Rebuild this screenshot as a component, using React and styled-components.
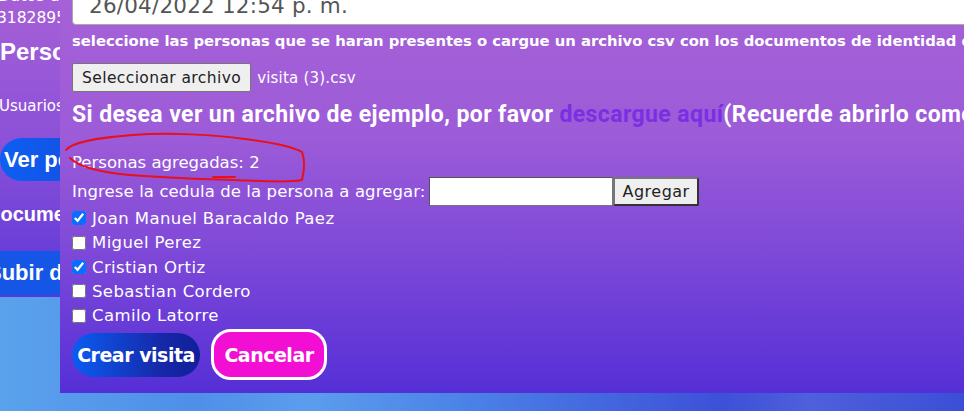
import styled, { createGlobalStyle } from "styled-components";

const GlobalStyle = createGlobalStyle`
  html, body {
    margin: 0;
    padding: 0;
    overflow: hidden;
  }
  body {
    font-family: "DejaVu Sans", "Liberation Sans", sans-serif;
  }
  * {
    box-sizing: border-box;
  }
`;

const gothic = `"DejaVu Sans", "Liberation Sans", sans-serif`;

const Page = styled.div`
  position: relative;
  width: 964px;
  height: 411px;
  overflow: hidden;
  background: linear-gradient(
    90deg,
    #5aa2ec 0%,
    #4f8fe9 20%,
    #5b9ded 32%,
    #4a7fe6 50%,
    #4468df 62%,
    #3d50d8 75%,
    #4e60dc 84%,
    #3c4ed6 100%
  );
`;

const BehindCard = styled.div`
  width: 420px;
  height: 297px;
  background: linear-gradient(180deg, #a660d6 0%, #8a50d8 50%, #5a36d8 100%);
  display: flex;
  flex-direction: column;
  color: #fff;
  overflow: hidden;
`;

const BehindText = styled.div`
  margin-left: ${(p) => p.$offset || 0}px;
  margin-top: ${(p) => p.$top || 0}px;
  font-family: ${(p) => (p.$bold ? `"Liberation Sans", sans-serif` : gothic)};
  font-size: ${(p) => p.$size || 15}px;
  font-weight: ${(p) => (p.$bold ? 700 : 400)};
  line-height: ${(p) => p.$lh || 20}px;
  white-space: nowrap;
`;

const BehindPill = styled.div`
  margin-top: ${(p) => p.$top}px;
  margin-left: ${(p) => p.$offset || 0}px;
  width: ${(p) => p.$width}px;
  height: ${(p) => p.$height}px;
  border-radius: ${(p) => p.$radius}px;
  background: ${(p) =>
    p.$flat ? "#1656e6" : "linear-gradient(90deg, #0d5ff2 0%, #1e3ccc 100%)"};
  padding-left: ${(p) => p.$pad}px;
  display: flex;
  align-items: center;
  font-family: "Liberation Sans", sans-serif;
  font-weight: 700;
  font-size: 22px;
  color: #fff;
  white-space: nowrap;
`;

const Modal = styled.div`
  position: absolute;
  left: 60px;
  top: -30px;
  right: -300px;
  bottom: 18px;
  padding: 0 12px 13px;
  background: linear-gradient(180deg, #a862d7 0%, #9c5bd8 40%, #7a46d8 70%, #552fd6 100%);
  display: flex;
  flex-direction: column;
  color: #fff;
  font-family: ${gothic};
`;

const DateField = styled.div`
  height: 56px;
  background: #fff;
  border: 1px solid #a9a9a9;
  border-radius: 4px;
  padding: 23px 0 0 16px;
  font-family: ${gothic};
  font-size: 21.5px;
  line-height: 24px;
  color: #555;
  letter-spacing: 0.2px;
`;

const Hint = styled.p`
  margin: 7px 0 0;
  font-size: 14.8px;
  line-height: 18px;
  font-weight: 700;
  white-space: nowrap;
`;

const FileRow = styled.div`
  margin-top: 13px;
  display: flex;
  align-items: center;
  gap: 6px;
`;

const NativeButton = styled.button`
  height: 29px;
  padding: 0 ${(p) => (p.$raised ? 7 : 9)}px;
  background: #efefef;
  border-style: solid;
  border-color: #767676;
  border-right-color: ${(p) => (p.$raised ? "#333" : "#767676")};
  border-bottom-color: ${(p) => (p.$raised ? "#333" : "#767676")};
  border-width: ${(p) => (p.$raised ? "2px" : "1px")};
  border-radius: 2px;
  font-family: ${gothic};
  font-size: ${(p) => (p.$raised ? 16 : 15.5)}px;
  letter-spacing: ${(p) => (p.$raised ? 0.5 : 0.4)}px;
  color: #222;
  cursor: pointer;
`;

const FileName = styled.span`
  font-size: 15px;
  letter-spacing: 0.2px;
  color: #fff;
`;

const ExampleNote = styled.p`
  margin: 10px 0 0;
  font-family: Roboto, "Liberation Sans", sans-serif;
  font-size: 23px;
  font-weight: 700;
  line-height: 26px;
  letter-spacing: 0.4px;
  white-space: nowrap;
`;

const ExampleLink = styled.a`
  color: #7a2fe3;
  text-decoration: none;
  cursor: pointer;
`;

const Count = styled.p`
  margin: 25px 0 0;
  font-size: 16.5px;
  line-height: 20px;
`;

const AddRow = styled.div`
  margin-top: 4px;
  display: flex;
  align-items: center;
  font-size: 16.5px;
  letter-spacing: 0.1px;
`;

const CedulaInput = styled.input`
  margin-left: 4px;
  width: 184px;
  height: 29px;
  border: 1px solid #767676;
  border-top-color: #555;
  border-left-color: #555;
  background: #fff;
  padding: 0 4px;
  font-family: ${gothic};
  font-size: 15px;
  outline: none;
`;

const PeopleList = styled.ul`
  margin: 0;
  padding: 0;
  list-style: none;
`;

const Person = styled.li`
  height: 24.4px;
  display: flex;
  align-items: center;
  font-size: 16.5px;
  letter-spacing: 0.4px;
`;

const Check = styled.input`
  margin: 0 6px 0 0;
  width: 14px;
  height: 14px;
  accent-color: #0b6cff;
`;

const Actions = styled.div`
  margin-top: 1px;
  display: flex;
  align-items: center;
  gap: 11px;
`;

const ActionButton = styled.button`
  height: ${(p) => (p.$danger ? 51 : 44)}px;
  width: ${(p) => (p.$danger ? 116 : 128)}px;
  padding: 0;
  border-radius: ${(p) => (p.$danger ? 20 : 22)}px;
  border: ${(p) => (p.$danger ? "3px solid #fff" : "none")};
  background: ${(p) =>
    p.$danger ? "#f20fd3" : "linear-gradient(90deg, #0b5cf2 0%, #1628a8 70%, #10209a 100%)"};
  color: #fff;
  font-family: ${gothic};
  font-weight: 700;
  font-size: 19px;
  letter-spacing: -0.5px;
  cursor: pointer;
  white-space: nowrap;
`;

const Annotation = styled.svg`
  position: absolute;
  left: 0;
  top: 0;
  pointer-events: none;
`;

const people = [
  { name: "Joan Manuel Baracaldo Paez", checked: true },
  { name: "Miguel Perez", checked: false },
  { name: "Cristian Ortiz", checked: true },
  { name: "Sebastian Cordero", checked: false },
  { name: "Camilo Latorre", checked: false },
];

export default function App() {
  return (
    <>
      <GlobalStyle />
      <Page>
        <BehindCard>
          <BehindText $top={-14} $offset={-2} $size={16}>
            Datos del visitante
          </BehindText>
          <BehindText $top={2} $offset={-3} $size={15.5}>
            3182895
          </BehindText>
          <BehindText $top={10} $offset={0} $size={24} $bold $lh={28}>
            Personas
          </BehindText>
          <BehindText $top={30} $offset={-1} $size={15}>
            Usuarios
          </BehindText>
          <BehindPill $top={22} $width={200} $height={43} $radius={22} $pad={4}>
            Ver personas
          </BehindPill>
          <BehindText $top={21} $offset={-14} $size={20} $bold $lh={24}>
            Documentos
          </BehindText>
          <BehindPill $top={25} $width={240} $height={44} $radius={0} $pad={0} $offset={-13} $flat>
            Subir documentos
          </BehindPill>
        </BehindCard>

        <Modal>
          <DateField>26/04/2022 12:54 p. m.</DateField>
          <Hint>
            seleccione las personas que se haran presentes o cargue un archivo csv con los
            documentos de identidad de los visitantes
          </Hint>
          <FileRow>
            <NativeButton>Seleccionar archivo</NativeButton>
            <FileName>visita (3).csv</FileName>
          </FileRow>
          <ExampleNote>
            Si desea ver un archivo de ejemplo, por favor{" "}
            <ExampleLink>descargue aquí</ExampleLink>(Recuerde abrirlo como texto)
          </ExampleNote>
          <Count>Personas agregadas: 2</Count>
          <AddRow>
            Ingrese la cedula de la persona a agregar:
            <CedulaInput type="text" />
            <NativeButton $raised>Agregar</NativeButton>
          </AddRow>
          <PeopleList>
            {people.map((p) => (
              <Person key={p.name}>
                <Check type="checkbox" defaultChecked={p.checked} />
                {p.name}
              </Person>
            ))}
          </PeopleList>
          <Actions>
            <ActionButton>Crear visita</ActionButton>
            <ActionButton $danger>Cancelar</ActionButton>
          </Actions>
        </Modal>

        <Annotation width="964" height="411" viewBox="0 0 964 411">
          <path
            d="M66 150 C 72 142, 95 138, 133 135 C 170 132, 215 135, 245 139 C 270 142, 292 146, 302 152 C 305 160, 304 172, 302 180 C 290 183, 260 181, 233 180 C 200 179, 160 178, 120 174 C 95 171, 78 166, 70 158"
            fill="none"
            stroke="#e8101a"
            strokeWidth="2"
            strokeLinecap="round"
          />
          <path d="M213 177 L 235 177" stroke="#e8101a" strokeWidth="2" strokeLinecap="round" />
        </Annotation>
      </Page>
    </>
  );
}
